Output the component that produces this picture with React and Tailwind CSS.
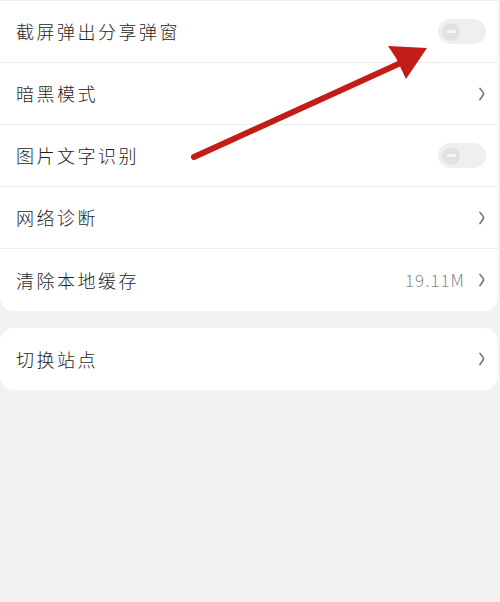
import React from 'react';

const font = { fontFamily: '"Noto Sans CJK SC", "Noto Sans", sans-serif' };

const Chevron = () => (
  <svg width="8" height="14" viewBox="0 0 8 14" className="text-[#7a7a7a]">
    <path d="M2 1.5 Q6 6 5.5 7 Q5 8.5 2 12.5" fill="none" stroke="currentColor" strokeWidth="1.8" strokeLinecap="round" />
  </svg>
);

const Toggle = () => (
  <div className="w-[48px] h-[25px] rounded-full bg-[#efefef] flex items-center pl-[4px]">
    <div className="w-[18px] h-[18px] rounded-full bg-[#e2e2e2] flex items-center justify-center">
      <div className="w-[9px] h-[3px] rounded-full bg-[#f7f7f7]" />
    </div>
  </div>
);

const Row = ({ label, right, last }) => (
  <div className={`h-[62px] flex items-center justify-between pl-[16px] pr-[12px] ${last ? '' : 'border-b border-[#ececec]'}`}>
    <span className="text-[18px] tracking-[2.5px] text-[#1e1e1e] font-light" style={font}>{label}</span>
    {right}
  </div>
);

export default function App() {
  const mainRows = [
    { label: '截屏弹出分享弹窗', right: <Toggle /> },
    { label: '暗黑模式', right: <Chevron /> },
    { label: '图片文字识别', right: <Toggle /> },
    { label: '网络诊断', right: <Chevron /> },
    {
      label: '清除本地缓存',
      right: (
        <div className="flex items-center gap-[13px]">
          <span className="text-[17px] tracking-[1px] text-[#8a8a8a] font-light" style={font}>19.11M</span>
          <Chevron />
        </div>
      ),
    },
  ];

  return (
    <div className="relative w-[500px] h-[602px] bg-[#f2f2f2] overflow-hidden">
      <div className="bg-white rounded-b-[14px] mr-[2px] border-t border-[#ececec]">
        {mainRows.map((r, i) => (
          <Row key={r.label} label={r.label} right={r.right} last={i === mainRows.length - 1} />
        ))}
      </div>

      <div className="bg-white rounded-[14px] mr-[2px] mt-[17px]">
        <Row label="切换站点" right={<Chevron />} last />
      </div>

      {/* red annotation arrow */}
      <svg className="absolute left-0 top-0 pointer-events-none" width="500" height="602">
        <line x1="194" y1="157" x2="405" y2="61" stroke="#c21d17" strokeWidth="6" strokeLinecap="round" />
        <polygon points="427,48 388,46 396,58 406,79" fill="#c21d17" />
      </svg>
    </div>
  );
}
